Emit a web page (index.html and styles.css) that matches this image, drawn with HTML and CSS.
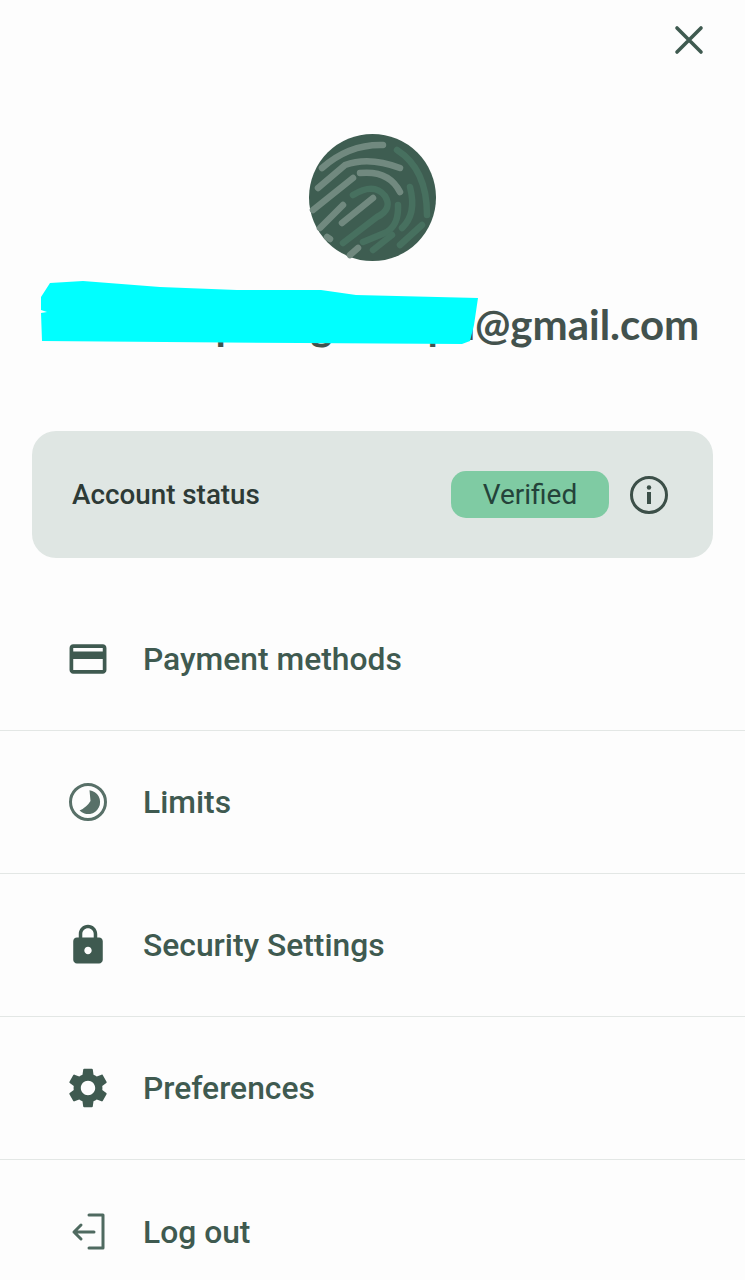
FILE: index.html
```html
<!DOCTYPE html>
<html lang="en">
<head>
  <meta charset="UTF-8" />
  <meta name="viewport" content="width=device-width, initial-scale=1.0" />
  <title>Account</title>
  <link rel="stylesheet" href="styles.css">
</head>
<body>
  <main class="sheet">
    <!-- ========== Top bar ========== -->
    <div class="topbar">
      <button class="close-btn" aria-label="Close">
        <svg class="icon" viewBox="0 0 48 48"><path d="M12 11 L36 35 M36 11 L12 35" fill="none" stroke="#3f5a50" stroke-width="3.6" stroke-linecap="round"/></svg>
      </button>
    </div>

    <!-- ========== Profile ========== -->
    <section class="profile">
      <svg class="avatar" viewBox="0 0 127 127">
        <circle cx="63.5" cy="63.5" r="63.5" fill="#3e5d51"/>
        <g fill="none" stroke="#71897f" stroke-width="6.5" stroke-linecap="round">
          <path d="M13 34 Q40 10 74 11"/>
          <path d="M9 54 L36 31 Q60 22 91 34"/>
          <path d="M4 76 L44 44"/>
          <path d="M51 39 Q80 36 91 58"/>
          <path d="M11 94 L34 71"/>
          <path d="M33 89 L64 64"/>
          <path d="M18 103 L21 105"/>
          <path d="M41 121 L49 114"/>
        </g>
        <g fill="none" stroke="#47705f" stroke-width="6.5" stroke-linecap="round">
          <path d="M88 16 Q118 35 118 81"/>
          <path d="M101 53 Q108 80 93 94"/>
          <path d="M44 61 Q65 48 76 62 Q84 75 68 83 L34 109"/>
          <path d="M54 108 L78 98 Q90 90 89 71"/>
          <path d="M64 116 L83 101"/>
          <path d="M91 111 L113 91"/>
        </g>
      </svg>
      <div class="email">
        <span>nnnnnnnpnnngnnnnpn@gmail.com</span>
        <svg class="scribble" viewBox="0 0 745 84"><path d="M41 19 L50 5 L83 3 L160 9 L237 12 L321 12 L356 17 L478 20 L474 47 L470 63 L462 66 L300 65 L42 63 L41 35 L47 34 L41 32 Z" fill="#00ffff"/></svg>
      </div>
    </section>

    <!-- ========== Status card ========== -->
    <section class="status-card">
      <span class="status-label">Account status</span>
      <span class="badge">Verified</span>
      <svg class="info-icon" viewBox="0 0 40 40">
        <circle cx="20" cy="20" r="17.5" fill="none" stroke="#3c4f48" stroke-width="3"/>
        <circle cx="20" cy="12.5" r="2.2" fill="#3c4f48"/>
        <rect x="18" y="17" width="4" height="12" fill="#3c4f48"/>
      </svg>
    </section>

    <!-- ========== Menu ========== -->
    <nav class="menu">
      <a class="menu-row">
        <svg class="icon" viewBox="-1 -1 26 26"><path d="M20 4H4c-1.11 0-1.99.89-1.99 2L2 18c0 1.11.89 2 2 2h16c1.11 0 2-.89 2-2V6c0-1.11-.89-2-2-2zm0 14H4v-6h16v6zm0-10H4V6h16v2z" fill="#3f5a50"/></svg>
        <span>Payment methods</span>
      </a>
      <a class="menu-row">
        <svg class="icon" viewBox="0 0 48 48">
          <circle cx="24" cy="24" r="17.5" fill="none" stroke="#587068" stroke-width="3"/>
          <path d="M25.5 12.2 A12 12 0 1 1 15.6 32.6 Q23 29 26.5 23 Z" fill="#587068"/>
        </svg>
        <span>Limits</span>
      </a>
      <a class="menu-row">
        <svg class="icon" viewBox="-1 -1 26 26"><path d="M18 8h-1V6c0-2.76-2.24-5-5-5S7 3.24 7 6v2H6c-1.1 0-2 .9-2 2v10c0 1.1.9 2 2 2h12c1.1 0 2-.9 2-2V10c0-1.1-.9-2-2-2zm-6 9c-1.1 0-2-.9-2-2s.9-2 2-2 2 .9 2 2-.9 2-2 2zm3.1-9H8.9V6c0-1.71 1.39-3.1 3.1-3.1 1.71 0 3.1 1.39 3.1 3.1v2z" fill="#3f5a50"/></svg>
        <span>Security Settings</span>
      </a>
      <a class="menu-row">
        <svg class="icon" viewBox="0 0 24 24"><path d="M19.14 12.94c.04-.3.06-.61.06-.94 0-.32-.02-.64-.07-.94l2.03-1.58c.18-.14.23-.41.12-.61l-1.92-3.32c-.12-.22-.37-.29-.59-.22l-2.39.96c-.5-.38-1.03-.7-1.62-.94l-.36-2.54c-.04-.24-.24-.41-.48-.41h-3.84c-.24 0-.43.17-.47.41l-.36 2.54c-.59.24-1.13.57-1.62.94l-2.39-.96c-.22-.08-.47 0-.59.22L2.74 8.87c-.12.21-.08.47.12.61l2.03 1.58c-.05.3-.09.63-.09.94s.02.64.07.94l-2.03 1.58c-.18.14-.23.41-.12.61l1.92 3.32c.12.22.37.29.59.22l2.39-.96c.5.38 1.03.7 1.62.94l.36 2.54c.05.24.24.41.48.41h3.84c.24 0 .44-.17.47-.41l.36-2.54c.59-.24 1.13-.56 1.62-.94l2.39.96c.22.08.47 0 .59-.22l1.92-3.32c.12-.22.07-.47-.12-.61l-2.01-1.58zM12 15.6c-1.98 0-3.6-1.62-3.6-3.6s1.62-3.6 3.6-3.6 3.6 1.62 3.6 3.6-1.62 3.6-3.6 3.6z" fill="#3f5a50"/></svg>
        <span>Preferences</span>
      </a>
      <a class="menu-row">
        <svg class="icon" viewBox="0 0 48 48"><path d="M25 7 H39 V40 H25 M30 24 H10 M17 17 L10 24 L17 31" fill="none" stroke="#4f6a60" stroke-width="3" stroke-linecap="round" stroke-linejoin="round"/></svg>
        <span>Log out</span>
      </a>
    </nav>
  </main>
</body>
</html>
```

FILE: styles.css
```css
/* --- Reset & base ---------------------------------------------------- */
* { box-sizing: border-box; margin: 0; padding: 0; }
html, body { height: 100%; overflow: hidden; }
body { font-family: Roboto, "Liberation Sans", sans-serif; background: #fdfdfd; color: #3f5a50; }

.sheet { height: 1280px; overflow: hidden; }
.icon { width: 48px; height: 48px; flex: none; display: block; }

/* --- Top bar --------------------------------------------------------- */
.topbar { display: flex; justify-content: flex-end; padding: 17px 32px 0; }
.close-btn { border: none; background: none; cursor: pointer; }

/* --- Profile --------------------------------------------------------- */
.profile { display: flex; flex-direction: column; align-items: center; margin-top: 69px; }
.avatar { width: 127px; height: 127px; display: block; }
.email {
  position: relative;
  width: 100%;
  height: 84px;
  margin-top: 17px;
  padding: 21px 0 0 4px;
  line-height: 50px;
  text-align: center;
  font-family: Lato, sans-serif;
  font-size: 42px;
  font-weight: 700;
  color: #43524d;
  white-space: nowrap;
}
.scribble { position: absolute; left: 0; top: 0; width: 745px; height: 84px; }

/* --- Status card ----------------------------------------------------- */
.status-card {
  display: flex;
  align-items: center;
  height: 127px;
  margin: 69px 32px 0;
  padding: 0 44px 0 40px;
  border-radius: 24px;
  background: #dfe6e3;
}
.status-label { flex: 1; font-size: 27.8px; font-weight: 500; color: #2d3a36; }
.badge {
  width: 158px;
  height: 47px;
  line-height: 47px;
  border-radius: 15px;
  background: #7fcba3;
  text-align: center;
  font-size: 28px;
  color: #24433a;
}
.info-icon { width: 40px; height: 40px; margin-left: 20px; flex: none; }

/* --- Menu ------------------------------------------------------------ */
.menu { margin-top: 30px; }
.menu-row {
  display: flex;
  align-items: center;
  gap: 31px;
  height: 143px;
  padding-left: 64px;
  border-bottom: 1px solid #e3e7e5;
  font-size: 31.8px;
  font-weight: 500;
}
.menu-row:last-child { border-bottom: none; }
```
